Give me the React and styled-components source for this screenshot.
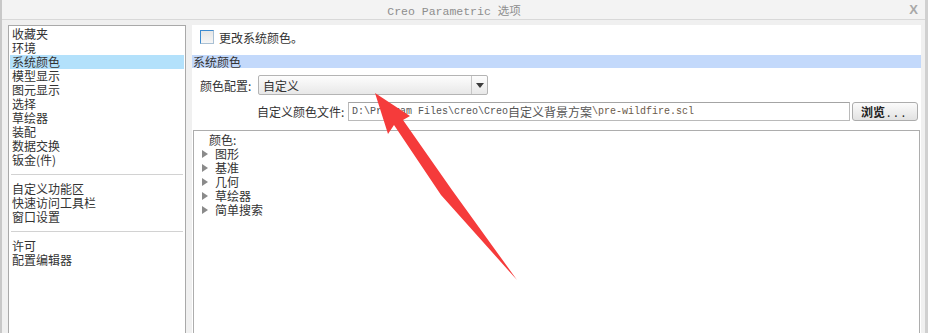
import styled, { createGlobalStyle } from 'styled-components'

const GlobalStyle = createGlobalStyle`
  html, body {
    margin: 0;
    padding: 0;
    background: #f0f0f0;
    overflow: hidden;
  }
  body {
    font-family: "Noto Sans CJK SC", "Liberation Sans", sans-serif;
    font-size: 12px;
    color: #333;
  }
`

const Screen = styled.div`
  position: relative;
  width: 928px;
  height: 333px;
  overflow: hidden;
`

const Window = styled.div`
  width: 100%;
  height: 100%;
  box-sizing: border-box;
  border-left: 2px solid #c8c8c8;
  border-right: 3px solid #d0d0d0;
  background: #f0f0f0;
  display: flex;
  flex-direction: column;
`

const TitleBar = styled.div`
  height: 19px;
  flex: none;
  border-bottom: 1px solid #d8d8d8;
  background: #f3f3f3;
  display: flex;
  align-items: center;
  padding-right: 7px;
`

const TitleSide = styled.div`
  flex: 1;
  display: flex;
  justify-content: flex-end;
`

const Title = styled.div`
  margin-right: 12px;
  color: #8e8e8e;
  font-family: "Liberation Mono", "Noto Sans CJK SC", monospace;
  font-size: 11.5px;
  white-space: nowrap;
`

const Close = styled.span`
  color: #a8a8a8;
  font-family: "Liberation Sans", sans-serif;
  font-size: 13px;
  font-weight: bold;
`

const Body = styled.div`
  flex: 1;
  min-height: 0;
  display: flex;
  gap: 6px;
  padding: 5px 4px 0 6px;
`

const Sidebar = styled.div`
  width: 178px;
  flex: none;
  box-sizing: border-box;
  background: #fff;
  border: 1px solid #a9a9a9;
  border-bottom: none;
  padding: 1px;
`

const NavItem = styled.div`
  height: 14px;
  line-height: 14px;
  padding-left: 2px;
  white-space: nowrap;
  background: ${p => (p.$active ? '#b3e1fb' : 'transparent')};
`

const Divider = styled.div`
  height: 1px;
  background: #d2d2d2;
  margin: 7px 1px;
`

const Content = styled.div`
  flex: 1;
  min-width: 0;
  background: #fff;
  display: flex;
  flex-direction: column;
  padding-top: 5px;
`

const CheckRow = styled.label`
  display: flex;
  align-items: center;
  gap: 5px;
  height: 14px;
  padding-left: 8px;
`

const Check = styled.span`
  width: 14px;
  height: 14px;
  box-sizing: border-box;
  border: 1px solid #a9c0d4;
  border-top-color: #3d8bd0;
  border-left-color: #3d8bd0;
  background: linear-gradient(#e6e6e6, #f6f6f6);
`

const Band = styled.div`
  margin-top: 11px;
  height: 13px;
  line-height: 13px;
  padding-left: 1px;
  background: #c3d9fb;
`

const FieldRow = styled.div`
  display: flex;
  align-items: center;
  margin-top: 7px;
  height: ${p => p.$h}px;
  padding-left: ${p => p.$indent}px;
`

const Label = styled.span`
  width: ${p => p.$w}px;
  flex: none;
  white-space: nowrap;
`

const Combo = styled.div`
  width: 230px;
  height: 100%;
  box-sizing: border-box;
  border: 1px solid #b4b4b4;
  border-radius: 2px;
  background: linear-gradient(#fdfdfd, #e8e8e8);
  display: flex;
  align-items: center;
`

const ComboText = styled.span`
  flex: 1;
  padding-left: 4px;
`

const ComboButton = styled.div`
  width: 15px;
  height: 100%;
  border-left: 1px solid #c6c6c6;
  display: flex;
  align-items: center;
  justify-content: center;
`

const DownArrow = styled.span`
  width: 0;
  height: 0;
  border-left: 4px solid transparent;
  border-right: 4px solid transparent;
  border-top: 5px solid #3c3c3c;
`

const PathInput = styled.div`
  width: 502px;
  height: 100%;
  box-sizing: border-box;
  border: 1px solid #bababa;
  border-top-color: #a4a4a4;
  background: #fff;
  padding-left: 3px;
  display: flex;
  align-items: center;
  color: #555;
  white-space: nowrap;
`

const Mono = styled.span`
  font-family: "Liberation Mono", monospace;
  font-size: 10px;
  color: ${p => p.$c || '#555'};
`

const Browse = styled.button`
  margin-left: 2px;
  width: 66px;
  height: 100%;
  box-sizing: border-box;
  border: 1px solid #acacac;
  border-radius: 3px;
  background: linear-gradient(#fbfbfb, #e2e2e2);
  font-family: "Noto Sans CJK SC", sans-serif;
  font-size: 12px;
  font-weight: bold;
  color: #222;
  padding: 0;
  display: flex;
  align-items: center;
  justify-content: center;
`

const Dots = styled.span`
  font-weight: normal;
  letter-spacing: 4px;
  margin-left: 2px;
`

const Tree = styled.div`
  flex: 1;
  margin: 9px 1px 0 1px;
  border: 1px solid #adadad;
  border-bottom: none;
  padding-top: 2px;
`

const TreeHead = styled.div`
  height: 14px;
  line-height: 14px;
  padding-left: 15px;
`

const TreeItem = styled.div`
  height: 14px;
  line-height: 14px;
  padding-left: 8px;
  display: flex;
  align-items: center;
  gap: 7px;
`

const Caret = styled.span`
  width: 0;
  height: 0;
  border-top: 4px solid transparent;
  border-bottom: 4px solid transparent;
  border-left: 6px solid #8a8a8a;
`

const Overlay = styled.svg`
  position: absolute;
  left: 0;
  top: 0;
  pointer-events: none;
`

const navTop = ['收藏夹', '环境', '系统颜色', '模型显示', '图元显示', '选择', '草绘器', '装配', '数据交换', '钣金(件)']
const navMid = ['自定义功能区', '快速访问工具栏', '窗口设置']
const navBot = ['许可', '配置编辑器']
const treeItems = ['图形', '基准', '几何', '草绘器', '简单搜索']

export default function App() {
  return (
    <Screen>
      <GlobalStyle />
      <Window>
        <TitleBar>
          <TitleSide />
          <Title>Creo Parametric 选项</Title>
          <TitleSide>
            <Close>X</Close>
          </TitleSide>
        </TitleBar>
        <Body>
          <Sidebar>
            {navTop.map(t => (
              <NavItem key={t} $active={t === '系统颜色'}>{t}</NavItem>
            ))}
            <Divider />
            {navMid.map(t => <NavItem key={t}>{t}</NavItem>)}
            <Divider />
            {navBot.map(t => <NavItem key={t}>{t}</NavItem>)}
          </Sidebar>
          <Content>
            <CheckRow>
              <Check />
              <span>更改系统颜色。</span>
            </CheckRow>
            <Band>系统颜色</Band>
            <FieldRow $h={20} $indent={8}>
              <Label $w={58}>颜色配置:</Label>
              <Combo>
                <ComboText>自定义</ComboText>
                <ComboButton><DownArrow /></ComboButton>
              </Combo>
            </FieldRow>
            <FieldRow $h={19} $indent={65}>
              <Label $w={91}>自定义颜色文件:</Label>
              <PathInput>
                <Mono>D:\Program Files\creo\Creo</Mono>
                <span>自定义背景方案</span>
                <Mono $c="#6b5a4a">\pre-wildfire.scl</Mono>
              </PathInput>
              <Browse>浏览<Dots>...</Dots></Browse>
            </FieldRow>
            <Tree>
              <TreeHead>颜色:</TreeHead>
              {treeItems.map(t => (
                <TreeItem key={t}><Caret /><span>{t}</span></TreeItem>
              ))}
            </Tree>
          </Content>
        </Body>
      </Window>
      <Overlay width="928" height="333" viewBox="0 0 928 333">
        <polygon
          points="375,93 410,116 403,120 452,190 517,280 441,195 394,125 388,134"
          fill="#f53b3b"
        />
      </Overlay>
    </Screen>
  )
}
